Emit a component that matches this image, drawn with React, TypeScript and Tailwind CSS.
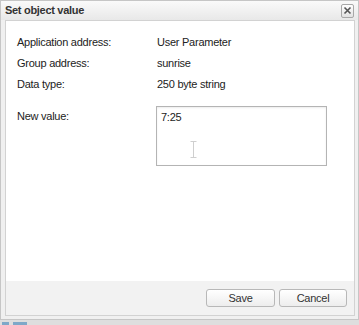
const rows = [
  { label: "Application address:", value: "User Parameter" },
  { label: "Group address:", value: "sunrise" },
  { label: "Data type:", value: "250 byte string" },
];

export default function App() {
  return (
    <div className="h-[325px] w-[359px] overflow-hidden bg-[#dedede] font-['Liberation_Sans',Arial,sans-serif] text-[11px] tracking-[-0.25px] text-[#222]">
      <div className="flex h-[320px] w-[359px] flex-col border border-[#c6c6c6] bg-[#f0f0f0]">
        {/* title bar */}
        <div className="flex h-[19px] items-center justify-between bg-gradient-to-b from-[#fafafa] to-[#e8e8e8] pl-[4px] pr-[4px]">
          <span className="font-bold tracking-[-0.3px] text-[#333]">Set object value</span>
          <button className="flex h-[14px] w-[13px] items-center justify-center rounded-[2px] border border-[#a8a8a8] bg-gradient-to-b from-white to-[#e2e2e2]">
            <svg width="9" height="9" viewBox="0 0 9 9">
              <path d="M1.5 1.5 L7.5 7.5 M7.5 1.5 L1.5 7.5" stroke="#555" strokeWidth="1.6" />
            </svg>
          </button>
        </div>

        <div className="mb-[3px] ml-[4px] mr-[3px] flex flex-1 flex-col border border-[#d2d2d2]">
          <div className="h-[260px] bg-white pl-[11px] pt-[11px]">
            {rows.map((r) => (
              <div key={r.label} className="flex leading-[21px]">
                <span className="w-[140px]">{r.label}</span>
                <span>{r.value}</span>
              </div>
            ))}
            <div className="mt-[11px] flex">
              <span className="w-[139px] pt-[3px] leading-[14px]">New value:</span>
              <div className="relative h-[60px] w-[171px] border border-[#b4b4b4] pl-[4px] pt-[3px] leading-[14px] shadow-[inset_0_1px_2px_rgba(0,0,0,0.08)]">
                7:25
                <svg className="absolute left-[33px] top-[34px]" width="7" height="17" viewBox="0 0 7 17">
                  <path d="M0.5 0.5 H6.5 M3.5 0.5 V16.5 M0.5 16.5 H6.5" stroke="#cfcfcf" strokeWidth="1" fill="none" />
                </svg>
              </div>
            </div>
          </div>
          <div className="flex flex-1 justify-end gap-[4px] bg-[#f2f2f2] pr-[7px] pt-[8px]">
            <button className="h-[18px] w-[69px] rounded-[3px] border border-[#b8b8b8] bg-gradient-to-b from-white to-[#ededed] text-[#333]">
              Save
            </button>
            <button className="h-[18px] w-[68px] rounded-[3px] border border-[#b8b8b8] bg-gradient-to-b from-white to-[#ededed] text-[#333]">
              Cancel
            </button>
          </div>
        </div>
      </div>
      <div className="flex gap-[4px] pl-[2px] pt-[2px]">
        <span className="h-[3px] w-[7px] bg-[#7fa8c8]" />
        <span className="h-[3px] w-[14px] bg-[#7fa8c8]" />
      </div>
    </div>
  );
}
